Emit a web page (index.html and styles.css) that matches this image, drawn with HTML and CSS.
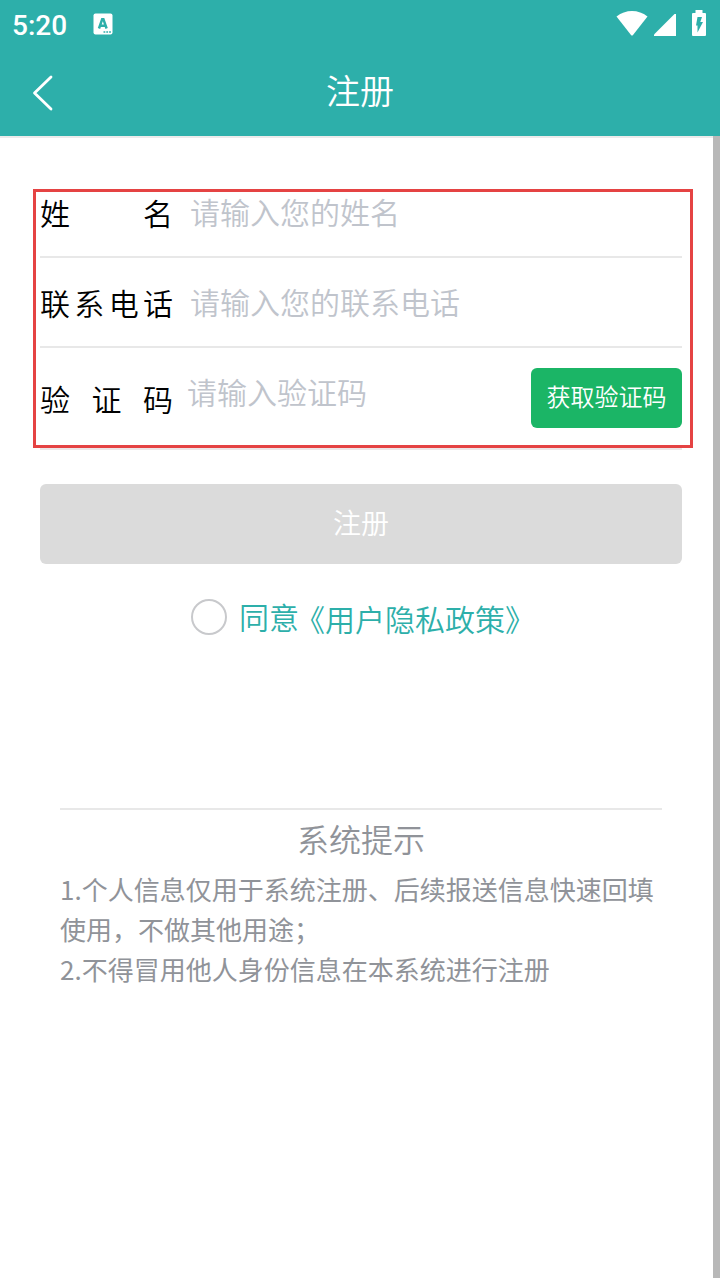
FILE: index.html
```html
<!DOCTYPE html>
<html lang="zh-CN">
<head>
<meta charset="utf-8">
<title>注册</title>
<link rel="stylesheet" href="styles.css">
</head>
<body>
<div class="screen">
  <header class="header">
    <div class="status">
      <span class="clock">5:20</span>
      <svg class="app-icon" width="20" height="22" viewBox="0 0 20 22">
        <rect x="0.5" y="0.5" width="19" height="21" rx="2" fill="#fff"/>
        <path d="M6 15.500 9.200 6.200h1.200L13.600 15.500M7.500 12.800h4.600" fill="none" stroke="#2dafaa" stroke-width="2.500"/>
        <path d="M10.500 19h7.500" stroke="#2dafaa" stroke-width="1.600" stroke-dasharray="1.800 1"/>
      </svg>
      <div class="signals">
        <svg width="32" height="25" viewBox="0 0 32 25"><path d="M.5 5.500Q7.500 0 16 0t15.500 5.500L17 24Q16 25 15 24Z" fill="#fff"/></svg>
        <svg width="22" height="22" viewBox="0 0 22 22"><path d="M20.500 0H22v22H0v-1.500Z" fill="#fff"/></svg>
        <svg class="battery" width="14" height="26" viewBox="0 0 14 26"><path d="M3.500 0h7v3H13q1 0 1 1v21q0 1-1 1H1q-1 0-1-1V4q0-1 1-1h2.500Z" fill="#fff"/><path d="M5.500 7h4.500L8.300 12H11L5.500 22.500V15.500H4Z" fill="#2dafaa"/></svg>
      </div>
    </div>
    <div class="navbar">
      <svg class="back" width="22" height="36" viewBox="0 0 22 36"><path d="M19 2 2.500 18 19 34" fill="none" stroke="#fff" stroke-width="2.800" stroke-linecap="round" stroke-linejoin="round"/></svg>
      <h1 class="title">注册</h1>
    </div>
  </header>
  <main class="page">
    <form class="form">
      <div class="row">
        <div class="label"><span>姓</span><span>名</span></div>
        <div class="hint">请输入您的姓名</div>
      </div>
      <div class="row">
        <div class="label"><span>联</span><span>系</span><span>电</span><span>话</span></div>
        <div class="hint">请输入您的联系电话</div>
      </div>
      <div class="row row-code">
        <div class="label label-code"><span>验</span><span>证</span><span>码</span></div>
        <div class="hint hint-code">请输入验证码</div>
        <div class="code-button">获取验证码</div>
      </div>
      <div class="highlight"></div>
    </form>
    <div class="submit">注册</div>
    <div class="agree">
      <span class="radio"></span>
      <span class="agree-text">同意</span>
      <span class="policy">《用户隐私政策》</span>
    </div>
    <section class="tips">
      <h2 class="tips-title">系统提示</h2>
      <p class="tip">1.个人信息仅用于系统注册、后续报送信息快速回填使用，不做其他用途；</p>
      <p class="tip">2.不得冒用他人身份信息在本系统进行注册</p>
    </section>
    <div class="scrollbar"></div>
  </main>
</div>
</body>
</html>
```
FILE: styles.css
```css
* { box-sizing: border-box; }
body {
  margin: 0;
  background: #fff;
  font-family: "Noto Sans CJK SC", sans-serif;
  font-weight: 350;
}
svg { display: block; }
.screen {
  height: 1280px;
  overflow: hidden;
  display: flex;
  flex-direction: column;
}
.header {
  height: 138px;
  background: #2dafaa;
  border-bottom: 2px solid #ebebeb;
  color: #fff;
}
.status {
  height: 48px;
  display: flex;
  align-items: center;
  padding: 0 14px 0 12px;
}
.clock {
  width: 81px;
  font: 500 28px/46px Roboto, sans-serif;
  padding-top: 4px;
}
.signals {
  margin-left: auto;
  margin-bottom: 2px;
  display: flex;
  align-items: flex-end;
  gap: 6px;
}
.battery { margin-left: 10px; }
.navbar {
  height: 88px;
  display: flex;
  align-items: center;
  padding: 0 32px;
}
.back { margin-top: 2px; }
.title {
  flex: 1;
  margin: 0 22px 0 0;
  text-align: center;
  font-size: 34px;
  line-height: 84px;
  height: 88px;
  font-weight: inherit;
}
.page {
  position: relative;
  height: 1142px;
  padding: 30px 38px 0 40px;
}
.form { position: relative; }
.row {
  height: 90px;
  display: flex;
  border-bottom: 2px solid #e8e8e8;
  font-size: 30px;
  line-height: 86px;
}
.label {
  width: 133px;
  padding-top: 1px;
  display: flex;
  justify-content: space-between;
  color: #000;
}
.hint {
  margin-left: 17px;
  color: #c0c4cc;
}
.row-code {
  height: 102px;
  border-bottom-color: #ede6e7;
}
.label-code { padding-top: 7px; }
.hint-code { margin-left: 14px; }
.code-button {
  margin: 20px 0 0 auto;
  width: 151px;
  height: 60px;
  border-radius: 6px;
  background: #1bb566;
  color: #fff;
  font-size: 24px;
  line-height: 56px;
  text-align: center;
}
.highlight {
  position: absolute;
  left: -7px;
  top: 21px;
  width: 660px;
  height: 259px;
  border: 3px solid #e54343;
}
.submit {
  margin-top: 34px;
  height: 80px;
  border-radius: 6px;
  background: #dbdbdb;
  color: #fff;
  font-size: 28px;
  line-height: 76px;
  text-align: center;
}
.agree {
  display: flex;
  align-items: center;
  height: 44px;
  margin-top: 31px;
  padding-left: 151px;
  color: #2dafaa;
  font-size: 30px;
  line-height: 42px;
}
.radio {
  width: 36px;
  height: 36px;
  border: 2px solid #c8c9cc;
  border-radius: 50%;
}
.agree-text {
  margin-left: 12px;
  padding-bottom: 2px;
}
.policy {
  margin-left: -4px;
  padding-top: 2px;
}
.tips {
  margin: 169px 20px 0;
  border-top: 2px solid #e8e8e8;
  color: #909399;
}
.tips-title {
  margin: 0;
  height: 59px;
  font-size: 32px;
  font-weight: inherit;
  line-height: 56px;
  text-align: center;
}
.tip {
  margin: 0;
  font-size: 26px;
  line-height: 40px;
  font-weight: 400;
}
.scrollbar {
  position: absolute;
  top: -2px;
  right: 0;
  width: 7px;
  height: 1142px;
  background: #b8b8b8;
}
```
